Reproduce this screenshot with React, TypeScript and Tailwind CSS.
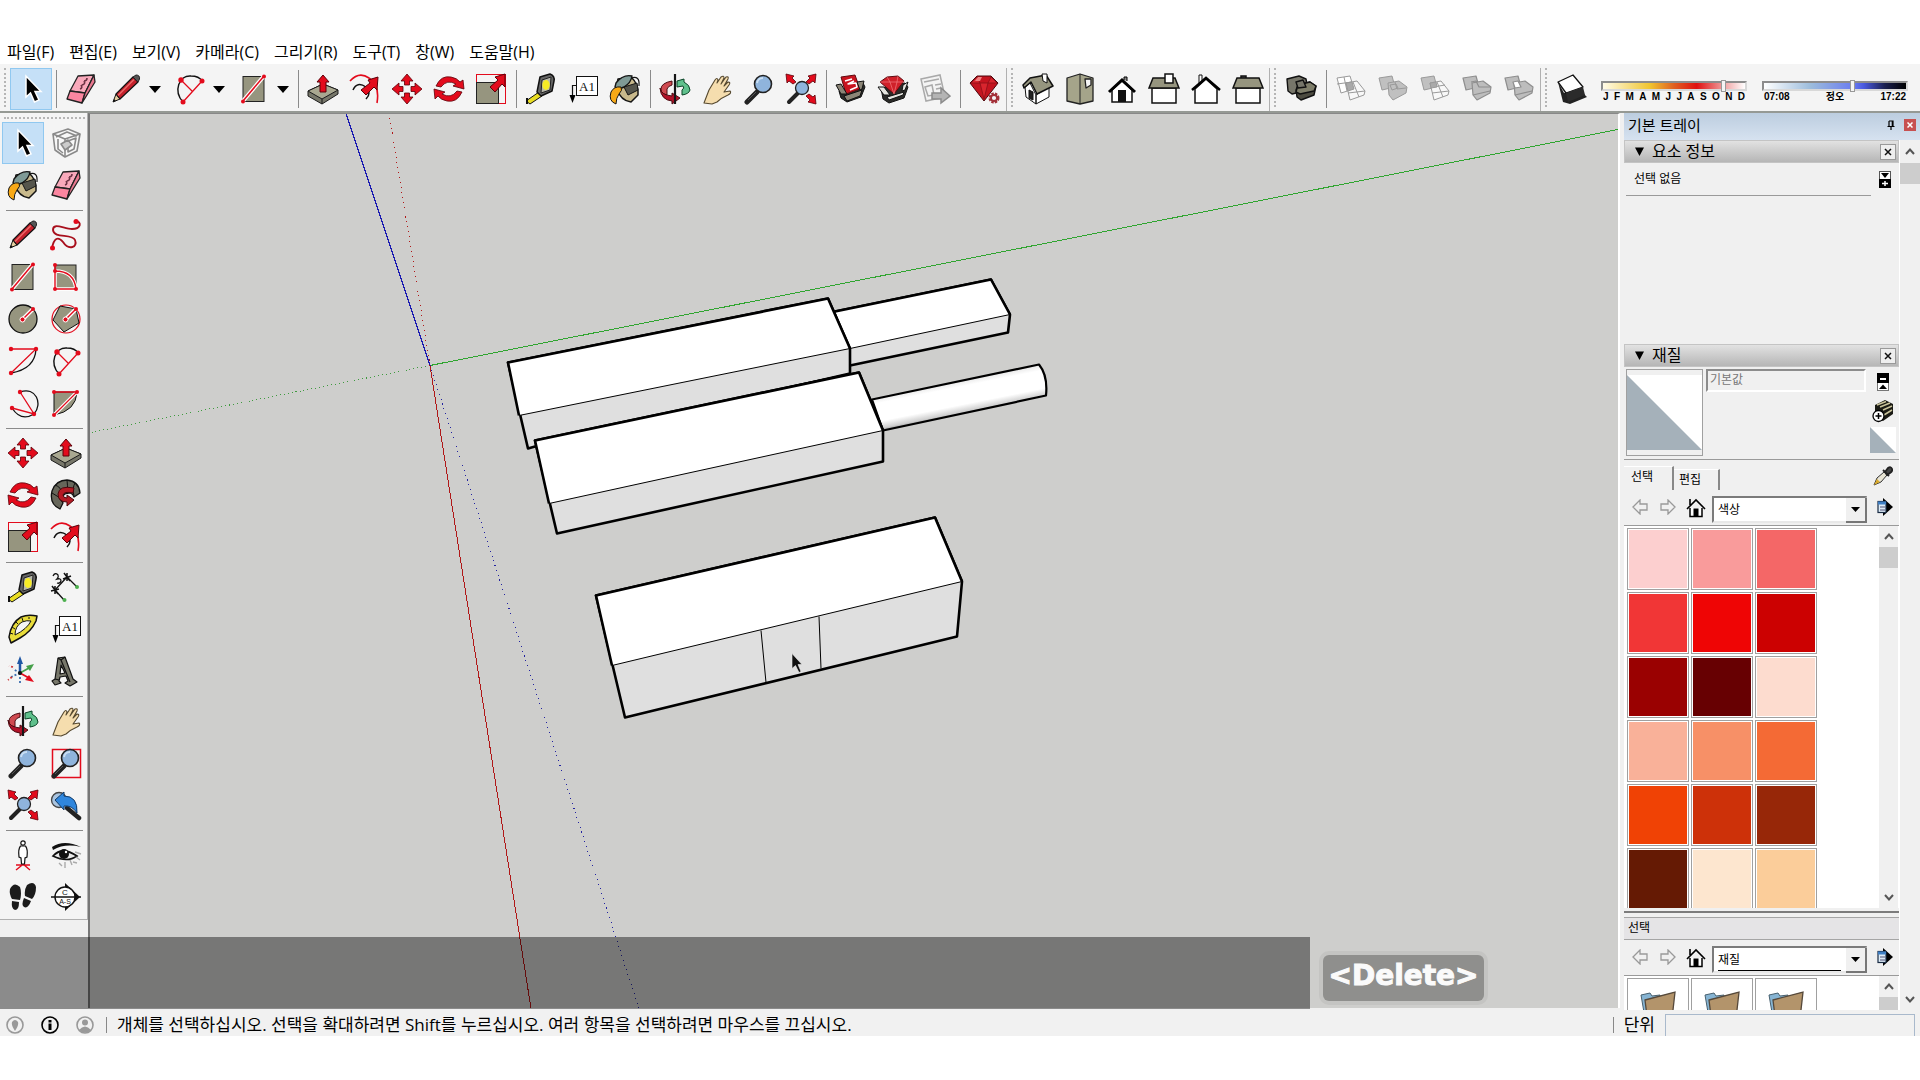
import React from 'react';

const RED = '#e30b1c';
const DARK_RED = '#a80f1c';
const TAUPE = '#96957f';
const INK = '#111111';

const zoomGlass = (
  <>
    <path d="M14 19 L4 29" stroke="#222" strokeWidth="5" strokeLinecap="round" />
    <path d="M13 19 L5 27" stroke="#555" strokeWidth="1" />
    <circle cx="20" cy="11" r="8.5" fill="#8fb4dc" stroke="#222" strokeWidth="1.6" />
    <path d="M14 10 a6 6 0 0 1 6 -5" stroke="#c9def2" strokeWidth="2" fill="none" />
  </>
);

const scaleArrow = (
  <path d="M28 2 L18 5 L21 8 L13 15 L18 20 L25 12 L28 15 Z" transform="translate(2 -1)" fill={RED} stroke="#5a0008" strokeWidth="1" />
);

const solidBack = 'M2 5 L15 3 L18 14 L5 17 Z';
const solidFront = 'M11 10 L22 8 L30 14 L29 20 L16 27 L12 22 Z';

const ICONS: Record<string, React.ReactNode> = {
  cursor: <path d="M11 3 V24 L15.500 20 L19.500 29 L24 27 L20 18.500 H26 Z" fill="#000" stroke="#fff" strokeWidth="1.500" />,
  eraser: (
    <g stroke="#222" strokeWidth="1.300" strokeLinejoin="round">
      <path d="M13 3 L29 2 L20 20 L5 18 Z" fill="#f9a9bb" />
      <path d="M5 18 L20 20 L17 30 L2 26 Z" fill="#fb86a0" />
      <path d="M20 20 L29 2 L30 9 L17 30 Z" fill="#e8788f" />
      <path d="M15 16 q3 -1 1 -4 M17 12 q4 -1 2 -4 M19 8 q3 0 3 -3" fill="none" stroke="#6c3344" strokeWidth="1.600" />
    </g>
  ),
  pencil: (
    <g strokeLinejoin="round">
      <path d="M3 29 L6 21 L10 26 Z" fill="#e5cfa0" stroke="#111" />
      <path d="M6 21 L23 4 L28 9 L10 26 Z" fill="#c4202b" stroke="#111" strokeWidth="1.200" />
      <path d="M8 22.500 L24 6.500" stroke="#ec6a6a" strokeWidth="1.400" />
      <path d="M23 4 L26 2 Q30 2 29.500 6 L28 9 Z" fill="#555" stroke="#222" />
      <path d="M3 29 L4 26 L6 28 Z" fill="#111" />
    </g>
  ),
  arc2: (
    <g fill="none">
      <path d="M9 29 C-1 18 5 2 17 3 Q25 3 28 8" stroke={INK} strokeWidth="1.400" />
      <path d="M7 7 L18 18 M9 29 L28 8" stroke={RED} strokeWidth="1.300" />
      <g fill={RED}><circle cx="7" cy="7" r="2.700" /><circle cx="28" cy="8" r="2.500" /><circle cx="9" cy="29" r="2.500" /></g>
    </g>
  ),
  rect: (
    <>
      <rect x="5" y="3.500" width="21" height="25" fill={TAUPE} stroke="#222" />
      <path d="M5 28 L26 3" stroke="#fff" strokeWidth="4" />
      <path d="M5 28 L26 3" stroke={RED} strokeWidth="1.500" />
      <circle cx="26" cy="3.500" r="2" fill={RED} /><circle cx="5" cy="28.500" r="2" fill={RED} />
    </>
  ),
  pushpull: (
    <g strokeLinejoin="round" stroke="#1b1b1b">
      <path d="M1 18 L16 11 L31 17 L31 21 L15 31 L1 23 Z" fill="#77776a" />
      <path d="M1 18 L16 11 L31 17 L15 26 Z" fill="#a9a891" />
      <path d="M15 26 V31" />
      <path d="M16 2 L22 9 H19 V19 H13 V9 H10 Z" fill={RED} stroke="#5a0008" />
    </g>
  ),
  offset: (
    <g fill="none">
      <path d="M1 8 Q10 -2 20 5 Q31 12 28 30" stroke={RED} strokeWidth="1.600" />
      <path d="M4 17 Q8 8 17 14 Q23 20 17 26" stroke={INK} strokeWidth="1.500" />
      <path d="M29 4 L19 7 L21 10 L12 17 L17 22 L25 14 L28 17 Z" fill={RED} stroke="#5a0008" />
    </g>
  ),
  move: (
    <g fill={RED} stroke="#5a0008" strokeWidth="0.800">
      <path d="M16 1 L22 8 H18.500 V12 H13.500 V8 H10 Z" />
      <path d="M16 31 L22 24 H18.500 V20 H13.500 V24 H10 Z" />
      <path d="M1 16 L8 10 V13.500 H12 V18.500 H8 V22 Z" />
      <path d="M31 16 L24 10 V13.500 H20 V18.500 H24 V22 Z" />
    </g>
  ),
  rotate: (
    <g fill={RED} stroke="#5a0008" strokeWidth="0.800">
      <path d="M3 13 Q8 2 18 4 Q24 5 27 9 L30 7 L31 16 L20 13 L23 11 Q14 6 8 14 Z" />
      <path d="M29 19 Q24 30 14 28 Q8 27 5 23 L2 26 L1 16 L12 19 L9 21 Q18 26 24 18 Z" />
    </g>
  ),
  scale: (
    <>
      <rect x="1.500" y="1.500" width="29" height="29" fill="none" stroke={RED} />
      <rect x="1.500" y="9.500" width="22" height="21" fill={TAUPE} stroke="#222" />
      {scaleArrow}
    </>
  ),
  tape: (
    <g strokeLinejoin="round">
      <path d="M1 28 L14 19 L17 23 L5 31 Z" fill="#e9dd22" stroke="#111" />
      <path d="M2 25 V31" stroke="#111" strokeWidth="2" />
      <path d="M15 4 L25 1 Q30 3 29 8 L27 18 L16 23 L12 19 Z" fill="#666" stroke="#111" strokeWidth="1.500" />
      <path d="M17 7 L26 4 L25 17 L16 20 Z" fill="#b8b8ac" stroke="#222" />
      <ellipse cx="21" cy="12" rx="3.700" ry="5" fill="#f7ec26" />
    </g>
  ),
  text: (
    <>
      <rect x="9.500" y="3.500" width="21" height="19" fill="#fff" stroke="#111" />
      <text x="20" y="17.500" textAnchor="middle" fontSize="13" fontFamily="'Liberation Serif', serif" fill="#111">A1</text>
      <path d="M9 12.500 H5.500 V23" fill="none" stroke="#111" strokeWidth="1.200" />
      <path d="M2.500 22 H8.500 L5.500 30 Z" fill="#000" />
    </>
  ),
  bucket: (
    <g strokeLinejoin="round" stroke="#151515">
      <path d="M9 6 L22 4 Q30 11 29 22 L22 29 Q12 28 7 15 Z" fill="#c8b98c" strokeWidth="1.500" />
      <path d="M15 14 L28 10 L29 17 L19 22 Z" fill="#55554c" />
      <path d="M7 10 Q14 1 23 3 Q22 10 15 14 Q9 17 6 14 Z" fill="#7f9a96" strokeWidth="1.400" />
      <path d="M22 5 Q31 2 30 13" fill="none" strokeWidth="1.200" />
      <path d="M2 19 Q5 13 12 14 Q14 17 10 21 Q7 25 7 31 Q-1 28 2 19 Z" fill="#f8a916" />
    </g>
  ),
  orbit: (
    <g strokeLinejoin="round">
      <path d="M13 8 Q2 10 2 16 Q2 21 8 22 L8 16 Q9 13 13 12 Z" fill="#cf4a50" stroke="#4a0a10" />
      <path d="M18 8 L25 6 V9 Q31 12 31 17 Q30 21 23 22 V17 Q26 15 24 13 L18 14 Z" fill="#5fc08c" stroke="#0a4426" />
      <path d="M1 15 Q2 22 13 23 V20 L21 25 L13 31 V28 Q2 27 1 15 Z" fill="#b31229" stroke="#4a0a10" />
      <path d="M16 1 V31" stroke="#161616" strokeWidth="2.200" />
    </g>
  ),
  hand: (
    <path d="M3 30 L8 17 L14 7 Q16 4 17 7 L16 10 L20 4 Q23 2 23 5 L20 11 L25 4 Q28 3 27 6 L23 13 L27 9 Q30 9 28 12 L23 19 L29 18 Q31 20 27 22 Q20 25 16 29 L11 31 Z" fill="#f5ddae" stroke="#55482e" strokeWidth="1.100" strokeLinejoin="round" />
  ),
  zoom: zoomGlass,
  zoomext: (
    <>
      <path d="M13 20 L4 29" stroke="#222" strokeWidth="4" strokeLinecap="round" />
      <circle cx="17" cy="15" r="6.500" fill="#8fb4dc" stroke="#222" strokeWidth="1.300" />
      <g fill={RED} stroke="#5a0008" strokeWidth="0.800">
        <path d="M1 1 L9 3 L7 5 L11 9 L8 11 L4 8 L2 10 Z" />
        <path d="M31 1 L23 3 L25 5 L21 9 L24 11 L28 8 L30 10 Z" />
        <path d="M31 31 L23 29 L25 27 L21 23 L24 21 L28 24 L30 22 Z" />
      </g>
    </>
  ),
  zoomwin: (
    <>
      <rect x="2.500" y="2.500" width="28" height="28" fill="none" stroke={RED} strokeWidth="1.500" />
      {zoomGlass}
    </>
  ),
  previous: (
    <>
      <circle cx="9" cy="11" r="7.500" fill="#a9c4e0" stroke="#444" strokeWidth="1.300" />
      <path d="M17 19 L29 29" stroke="#222" strokeWidth="4.500" strokeLinecap="round" />
      <path d="M5 11 L14 3 V7 Q28 7 27 24 Q22 16 14 17 V21 Z" fill="#2f86dd" stroke="#123a66" strokeLinejoin="round" />
    </>
  ),
  warehouse: (
    <g strokeLinejoin="round" stroke="#111">
      <path d="M4 18 L28 10 L30 14 L26 24 L12 29 L6 25 Z" fill="#2b2b29" />
      <path d="M6 4 L20 2 L25 16 L11 21 Z" fill="#c9141f" stroke="#5e0a10" />
      <path d="M10 8 L17 6 M19 8 L13 11 L21 10 L22 14 L15 17" fill="none" stroke="#fff" strokeWidth="1.500" />
      <path d="M1 12 L6 11 L12 21 L6 21 Z M22 9 L29 8 L27 16 L25 17 Z M9 23 L27 17 L25 23 L12 28 Z" fill="#8b8577" />
    </g>
  ),
  extwarehouse: (
    <g strokeLinejoin="round" stroke="#111">
      <path d="M4 15 L28 10 L31 14 L27 25 L12 30 L6 26 Z" fill="#2b2b29" />
      <path d="M3 9 L10 4 L21 3 L27 8 L17 21 Z" fill="#d02029" stroke="#5e0a10" />
      <path d="M3 9 H27 M10 4 L13 9 L17 21 M21 3 L20 9 L17 21" fill="none" stroke="#f27a7e" strokeWidth="0.700" />
      <path d="M1 14 L7 14 L13 22 L7 22 Z M26 12 L31 9 L28 17 L25 18 Z M10 24 L27 19 L26 22 L12 27 Z" fill="#e5e5e0" />
    </g>
  ),
  layout: (
    <g fill="#f3f3f3" stroke="#a9a9a9" strokeWidth="1.500">
      <path d="M2 6 L21 2 L26 24 L7 28 Z" />
      <path d="M5 9 L20 6 M6 14 L13 12 L15 22 L9 23 Z M16 12 L22 11 M17 16 L22 15" />
      <path d="M13 20 H22 V15 L31 23 L22 30 V26 H13 Z" fill="#b4b4b4" stroke="#8b8b8b" />
    </g>
  ),
  gem: (
    <>
      <path d="M1 10 L8 3 H22 L29 10 L15 28 Z" fill="#c4141f" stroke="#4d070d" />
      <path d="M2 10 H28 L22 4 L19 10 L15 26 L11 10 L8 4 Z" fill="#d8252e" stroke="#8c0f18" strokeWidth="0.800" />
      <path d="M6 8 L9 4 L13 4 L11 8 Z" fill="#f28080" />
      <circle cx="25" cy="25" r="4" fill="#f3f3f3" stroke="#a33038" strokeWidth="3" strokeDasharray="2.200 1" />
      <circle cx="25" cy="25" r="3" fill="none" stroke="#a33038" strokeWidth="1.800" />
    </>
  ),
  iso: (
    <g stroke="#111" strokeLinejoin="round">
      <path d="M3 14 L8 10 L14 22 L14 31 L4 24 Z M14 22 L27 14 V24 L14 31 Z" fill="#fff" />
      <path d="M1 12 L8 5 L24 2 L31 13 L15 21 L9 9 L2 15 Z" fill={TAUPE} strokeWidth="1.500" />
      <path d="M20 1 H25 V10 L21 8 Z" fill="#fff" />
      <path d="M7 17 L11 19 V27 L7 25 Z" fill="#222" />
    </g>
  ),
  top: (
    <g stroke="#222" strokeLinejoin="round">
      <path d="M3 5 L16 1 L29 5 V28 L16 31 L3 28 Z" fill="#a5a48a" strokeWidth="1.300" />
      <path d="M16 1 V31" />
      <path d="M21 6 H27 V12 L22 15 Z" fill="#f5f5f5" strokeWidth="1.300" />
    </g>
  ),
  front: (
    <>
      <path d="M6 17 V29 H26 V17 L16 8 Z" fill="#fff" stroke="#111" strokeWidth="1.500" />
      <path d="M3 19 L16 7 L29 19" fill="none" stroke="#000" strokeWidth="3" />
      <path d="M21 8 V4 H18 V7" stroke="#000" fill="#888" />
      <rect x="12" y="17" width="8" height="12" fill="#111" />
    </>
  ),
  right: (
    <g stroke="#111" strokeWidth="1.500">
      <rect x="4" y="15" width="24" height="15" fill="#fff" />
      <path d="M5 5 H27 L31 15 H1 Z" fill={TAUPE} />
      <rect x="17" y="1" width="8" height="9" fill="#fff" />
    </g>
  ),
  back: (
    <>
      <path d="M9 10 V2 H12 V8" fill="#fff" stroke="#111" />
      <path d="M5 16 V30 H27 V16 L16 6 Z" fill="#fff" stroke="#111" strokeWidth="1.500" />
      <path d="M2 17 L16 5 L30 17" fill="none" stroke="#000" strokeWidth="2.500" />
    </>
  ),
  left: (
    <g stroke="#111" strokeWidth="1.500">
      <path d="M9 5 V3 H14 V5" fill="#555" />
      <rect x="4" y="15" width="24" height="15" fill="#fff" />
      <path d="M5 5 H27 L31 15 H1 Z" fill={TAUPE} />
    </g>
  ),
  outer: (
    <g stroke="#111" strokeWidth="1.400" strokeLinejoin="round">
      <path d="M2 6 L14 3 L21 6 L23 17 L7 21 L3 18 Z" fill="#77766a" />
      <path d="M11 17 L13 12 L25 9 L31 13 L29 22 L16 27 L12 24 Z" fill="#4c4b40" />
      <path d="M13 12 L25 9 L31 13 L29 18 L15 21 L11 19 Z" fill="#7f7e6a" />
      <path d="M11 9 L18 7 L21 14 L13 15 Z" fill="#77766a" />
    </g>
  ),
  intersect: (
    <g stroke="#9a9a9a" strokeLinejoin="round">
      <path d="M2 5 L15 3 L19 16 L6 20 Z M2 11 L17 9 M9 4 L12 18" fill="#fff" />
      <path d="M11 10 L22 8 L30 18 L29 22 L15 27 Z M13 20 L30 18 M18 9 L24 24" fill="#f8f8f8" />
      <path d="M11 10 L17 9 L19 16 L13 18 Z" fill="#aaa" />
    </g>
  ),
  union: (
    <g stroke="#9a9a9a" strokeLinejoin="round" fill="#c0c0c0">
      <path d={solidBack} /><path d={solidFront} />
      <path d="M13 12 L19 11 L21 15 L15 17 Z" /><path d="M18 9 L20 16 L29 15" fill="none" />
    </g>
  ),
  subtract: (
    <g stroke="#9a9a9a" strokeLinejoin="round">
      <path d={solidBack} fill="#c0c0c0" />
      <path d="M11 10 L22 8 L30 18 L29 22 L15 27 Z M13 20 L30 18 M18 9 L24 24 M14 14 L26 12" fill="#f8f8f8" />
      <path d="M11 10 L17 9 L18 14 L12 15 Z" fill="#aaa" />
    </g>
  ),
  trim: (
    <g stroke="#8e8e8e" strokeWidth="1.200" strokeLinejoin="round" fill="#bdbdbd">
      <path d={solidBack} /><path d={solidFront} />
      <path d="M10 9 L15 8 L18 14 L30 14 M12 22 L29 18" fill="none" />
    </g>
  ),
  split: (
    <g stroke="#8e8e8e" strokeWidth="1.200" strokeLinejoin="round" fill="#bdbdbd">
      <path d={solidBack} /><path d={solidFront} />
      <path d="M10 9 L15 8 L18 14 L12 15 Z" fill="#fff" /><path d="M12 22 L29 18" fill="none" />
    </g>
  ),
  shadow: (
    <g strokeLinejoin="round">
      <path d="M2 9 L8 20 L24 17 L31 24 L14 31 L7 29 Z" fill="#222" />
      <path d="M2 9 L17 2 L27 14 L10 20 Z" fill="#fff" stroke="#111" strokeWidth="1.300" />
      <path d="M10 20 L27 14 L29 22 L12 29 Z" fill="#2b2b2b" />
    </g>
  ),
  component: (
    <g fill="none" stroke="#8a8a8a" strokeWidth="1.600" strokeLinejoin="round">
      <path d="M3 7 L18 2 L30 7 L27 24 L15 30 L5 23 Z" fill="#f8f8f8" />
      <path d="M3 7 L15 12 L30 7 M15 12 V30 M6 10 L17 5 L27 9 M8 12 V22 L13 26 M18 14 L26 11 L24 22 L18 25 Z" />
      <path d="M11 17 L18 13 L22 18 L15 23 Z" fill="#ccc" />
    </g>
  ),
  freehand: (
    <>
      <path d="M2 29 C4 19 8 17 13 23 C19 32 28 28 25 21 C22 14 4 20 3 11 C3 3 14 10 22 10 C31 10 32 3 26 2" fill="none" stroke={DARK_RED} strokeWidth="1.900" />
      <circle cx="2.500" cy="29" r="2.500" fill={RED} /><circle cx="26" cy="2.500" r="2.500" fill={RED} />
    </>
  ),
  rotrect: (
    <>
      <rect x="5" y="4" width="21" height="24" fill={TAUPE} stroke="#222" />
      <path d="M5 28 V10 Q24 10 26 28 Z" fill={TAUPE} stroke="#fff" strokeWidth="3.500" />
      <path d="M5 4 V28 H26 Q24 10 5 10" fill="none" stroke={RED} strokeWidth="1.400" />
      <g fill={RED}><circle cx="5" cy="4" r="2" /><circle cx="5" cy="10" r="2" /><circle cx="5" cy="28" r="2" /><circle cx="26" cy="28" r="2" /></g>
    </>
  ),
  circle: (
    <>
      <circle cx="16" cy="16" r="14" fill={TAUPE} stroke="#111" strokeWidth="1.300" />
      <path d="M15 17 L26 6" stroke="#fff" strokeWidth="4" /><path d="M15 17 L26 6" stroke={RED} strokeWidth="1.500" />
      <circle cx="15.500" cy="16.500" r="2.500" fill={RED} stroke="#fff" /><circle cx="26" cy="6" r="2" fill={RED} />
    </>
  ),
  polygon: (
    <>
      <circle cx="16" cy="16" r="14" fill="none" stroke={RED} strokeWidth="1.200" />
      <path d="M10 3 L26 6 L29 20 L14 29 L3 17 Z" fill={TAUPE} stroke="#111" />
      <path d="M15 17 L26 6" stroke="#fff" strokeWidth="4" /><path d="M15 17 L26 6" stroke={RED} strokeWidth="1.500" />
      <circle cx="15.500" cy="16.500" r="2.500" fill={RED} stroke="#fff" /><circle cx="26" cy="6" r="2" fill={RED} />
    </>
  ),
  arc: (
    <g fill="none">
      <path d="M29 4 Q28 24 4 28" stroke={INK} strokeWidth="1.300" />
      <path d="M4 4 H29 L4 28" stroke={RED} strokeWidth="1.300" />
      <g fill={RED}><circle cx="4" cy="4" r="2.200" /><circle cx="29" cy="4" r="2.200" /><circle cx="4" cy="28" r="2.200" /></g>
    </g>
  ),
  arc3: (
    <g fill="none">
      <path d="M13 5 C29 -1 36 17 27 27 Q14 35 5 21" stroke={INK} strokeWidth="1.300" />
      <path d="M13 5 L27 27 L5 21" stroke={RED} strokeWidth="1.300" />
      <g fill={RED}><circle cx="13" cy="5" r="2.200" /><circle cx="27" cy="27" r="2.200" /><circle cx="5" cy="21" r="2.200" /></g>
    </g>
  ),
  pie: (
    <>
      <path d="M4 5 H27 Q26 24 4 28 Z" fill={TAUPE} stroke="#111" />
      <path d="M27 5 L4 28" stroke="#fff" strokeWidth="3.500" />
      <path d="M4 5 H27 L4 28" fill="none" stroke={RED} strokeWidth="1.300" />
      <g fill={RED}><circle cx="4" cy="5" r="2" /><circle cx="27" cy="5" r="2" /><circle cx="4" cy="28" r="2" /></g>
    </>
  ),
  followme: (
    <g stroke="#111" strokeLinejoin="round">
      <path d="M2 12 Q6 1 17 1 Q29 2 30 14 L24 18 Q22 12 15 15 Q10 18 13 24 L10 30 Q-1 25 2 12 Z" fill="#66665a" strokeWidth="1.300" />
      <path d="M2 14 Q8 16 13 24 M5 6 Q11 8 13 15 M17 1 Q18 6 17 14 M25 4 Q22 9 24 17" fill="none" />
      <path d="M24 9 Q9 6 8 15 Q8 23 17 23 V27 L24 21 L17 16 V19 Q13 19 13 16 Q14 12 23 14 Z" fill="#b51a24" stroke="#4a070c" />
    </g>
  ),
  dimension: (
    <>
      <path d="M5 19 L17 6 M5 19 L14 29 M17 6 L27 16" stroke="#111" strokeWidth="1.300" />
      <path d="M2 15 L8 23 M1 20 L9 18 M14 2 L20 10 M13 8 L21 5 M5 15 V23 M17 2 V10" stroke="#111" strokeWidth="1.500" />
      <circle cx="14.500" cy="29" r="2" fill="#4db04f" /><circle cx="27" cy="16" r="2" fill="#4db04f" />
      <path d="M3 5 Q5 1 8 4 Q9 6 7 8 Q11 7 11 10 Q10 13 7 12" fill="none" stroke="#111" strokeWidth="1.300" />
    </>
  ),
  protractor: (
    <g strokeLinejoin="round" stroke="#111">
      <path d="M4 30 L2 24 Q4 10 14 4 Q21 1 30 3 L29 8 Q24 19 13 25 Z" fill="#e8dc3a" strokeWidth="1.500" />
      <path d="M8 22 Q8 13 15 9 Q20 7 24 8 Q20 16 8 22 Z" fill="#f5f5f5" />
      <path d="M3 20 L6 21 M5 14 L8 16 M9 9 L11 11 M15 5 L16 8 M22 4 L22 6" />
    </g>
  ),
  axes: (
    <g strokeWidth="1.800">
      <path d="M13 18 V30 M13 18 L6 14 M13 18 L4 22" stroke="#3c6fb0" strokeDasharray="2 2" />
      <path d="M13 18 V8" stroke="#1f57a5" strokeWidth="2.500" /><path d="M13 18 L22 13" stroke="#45a04a" /><path d="M13 18 L22 23" stroke={RED} />
      <path d="M13 1 L16 9 H10 Z" fill="#1f57a5" /><path d="M27 9 L23 16 L19 11 Z" fill="#45a04a" /><path d="M27 27 L18 25 L22 20 Z" fill={RED} />
      <path d="M6 12 L2 11 M5 22 L1 25" stroke="#c33" strokeDasharray="2 2" />
      <circle cx="13" cy="18" r="2" fill="#111" />
    </g>
  ),
  text3d: (
    <g stroke="#111" strokeWidth="1.200" strokeLinejoin="round" fill="#77776a">
      <path d="M8 3 L15 2 L23 24 L27 27 L20 31 L15 28 L18 26 L16 21 L10 22 L9 26 L11 28 L5 30 L2 26 L5 24 Z" />
      <path d="M11 10 L15 18 L10 19 Z" fill="#f3f3f3" />
      <path d="M8 3 L11 5 L20 27 M11 5 L15 2 M5 24 L9 25" fill="none" />
    </g>
  ),
  position: (
    <g fill="none" stroke="#111" strokeWidth="1.200">
      <path d="M9 31 L14 27 L16 25 L23 31 M9 26 L23 26" stroke={RED} strokeWidth="1.400" />
      <circle cx="16" cy="4" r="2.200" fill="#fff" />
      <path d="M13.500 7 Q11 10 12 18 L14 19 L14.500 25 H17.500 L18 19 L20 18 Q21 10 18.500 7 Z" fill="#fff" />
    </g>
  ),
  eye: (
    <>
      <path d="M2 8 Q14 0 31 8 Q15 4 3 11 Z" fill="#111" />
      <path d="M3 17 Q12 7 27 17 Q17 24 3 17 Z" fill="#e9e9e9" stroke="#111" strokeWidth="1.700" />
      <circle cx="14" cy="15" r="5" fill="#111" /><circle cx="16" cy="13" r="1.200" fill="#fff" />
      <path d="M9 24 L12 27 M15 23 L15 29 M20 21 L22 26 M26 18 L30 21 M25 13 L31 15 M23 23 L27 24" stroke="#aaa" strokeWidth="1.400" />
    </>
  ),
  walk: (
    <g fill="#1b1b1b">
      <path d="M3 8 Q7 0 13 6 Q15 12 13 19 L5 18 Q2 13 3 8 Z" /><path d="M5 20 L12 21 Q12 29 8 29 Q4 28 5 20 Z" />
      <path d="M20 4 Q27 -1 29 6 Q29 14 25 18 L18 15 Q17 9 20 4 Z" /><path d="M17 17 L24 20 Q21 28 17 26 Q14 24 17 17 Z" />
    </g>
  ),
  section: (
    <>
      <path d="M15 2 L30 16 L15 30 Z" fill="#111" />
      <circle cx="15" cy="16" r="10" fill="#fff" stroke="#111" strokeWidth="1.400" />
      <path d="M1 16 H31" stroke="#111" strokeWidth="1.500" />
      <text x="15" y="14" textAnchor="middle" fontSize="8" fontFamily="'Liberation Sans', sans-serif" fill="#111">C</text>
      <text x="15" y="23" textAnchor="middle" fontSize="7" fontFamily="'Liberation Sans', sans-serif" fill="#111">A-S</text>
    </>
  ),
};

function Icon({ name }: { name: string }) {
  return <svg viewBox="0 0 32 32" className="size-8 shrink-0" aria-hidden="true" fill="none">{ICONS[name]}</svg>;
}

function Tool({ name, label, active }: { name: string; label: string; active?: boolean }) {
  return (
    <button aria-label={label} className={`flex size-[42px] shrink-0 items-center justify-center ${active ? 'border border-[#90c8f0] bg-[#c5e0f7]' : ''}`}>
      <Icon name={name} />
    </button>
  );
}

function SplitTool({ name, label }: { name: string; label: string }) {
  return (
    <div className="flex h-[42px] shrink-0 items-center">
      <button aria-label={label} className="flex w-[47px] justify-center"><Icon name={name} /></button>
      <button aria-label={`${label} 메뉴`} className="flex w-[17px] items-center">
        <svg viewBox="0 0 12 7" className="h-[7px] w-3" aria-hidden="true"><path d="M0 0 H12 L6 7 Z" fill="#000" /></svg>
      </button>
    </div>
  );
}

const VSep = () => <div className="flex h-[42px] w-2 shrink-0 justify-center"><div className="h-[38px] w-px self-center bg-[#8a8a8a]" /></div>;
const HSep = () => <div className="flex h-2 items-center px-1"><div className="h-px flex-1 bg-[#8a8a8a]" /></div>;
const Grip = () => (
  <div className="flex w-2.5 shrink-0 justify-center self-stretch pb-1"><div className="border-l-2 border-dotted border-[#b5b5b5]" /></div>
);

const MENUS = ['파일(F)', '편집(E)', '보기(V)', '카메라(C)', '그리기(R)', '도구(T)', '창(W)', '도움말(H)'];

const SIDE: string[][] = [
  ['cursor', 'component', 'bucket', 'eraser'],
  ['pencil', 'freehand', 'rect', 'rotrect', 'circle', 'polygon', 'arc', 'arc2', 'arc3', 'pie'],
  ['move', 'pushpull', 'rotate', 'followme', 'scale', 'offset'],
  ['tape', 'dimension', 'protractor', 'text', 'axes', 'text3d'],
  ['orbit', 'hand', 'zoom', 'zoomwin', 'zoomext', 'previous'],
  ['position', 'eye', 'walk', 'section'],
];

const SWATCHES = [
  '#fccfcf', '#f99b9b', '#f46767', '#f13636', '#ef0505', '#cc0101', '#9a0101', '#670002', '#fddccf',
  '#f9b199', '#f79067', '#f46a35', '#f04205', '#cd3109', '#972708', '#651a04', '#fde6cf', '#fbcd9a',
];

function Toolbar() {
  return (
    <div className="flex h-[49px] shrink-0 border-b-2 border-[#959994] bg-[#f4f4f4] pt-1">
      <div className="flex border-r border-[#b0b0b0]">
        <Grip />
        <Tool name="cursor" label="선택" active />
        <VSep />
        <Tool name="eraser" label="지우개" />
        <SplitTool name="pencil" label="선" />
        <SplitTool name="arc2" label="호" />
        <SplitTool name="rect" label="직사각형" />
        <VSep />
        {['pushpull', 'offset', 'move', 'rotate', 'scale'].map((n) => <Tool key={n} name={n} label={n} />)}
        <VSep />
        {['tape', 'text', 'bucket'].map((n) => <Tool key={n} name={n} label={n} />)}
        <VSep />
        {['orbit', 'hand', 'zoom', 'zoomext'].map((n) => <Tool key={n} name={n} label={n} />)}
        <VSep />
        {['warehouse', 'extwarehouse', 'layout'].map((n) => <Tool key={n} name={n} label={n} />)}
        <VSep />
        <Tool name="gem" label="확장" />
      </div>
      <div className="flex border-r border-[#b0b0b0]">
        <Grip />
        {['iso', 'top', 'front', 'right', 'back', 'left'].map((n) => <Tool key={n} name={n} label={n} />)}
      </div>
      <div className="flex border-r border-[#b0b0b0]">
        <Grip />
        <Tool name="outer" label="외부 쉘" />
        <VSep />
        {['intersect', 'union', 'subtract', 'trim', 'split'].map((n) => <Tool key={n} name={n} label={n} />)}
      </div>
      <div className="flex flex-1">
        <Grip />
        <Tool name="shadow" label="그림자" />
        <div className="flex gap-[15px] pt-[13px] pl-2">
          <ShadowSlider label="날짜" value={86} track="bg-[linear-gradient(90deg,#fffbe8,#f0c530_33%,#e06020_50%,#e01010_66%,#f0a0a0_85%,#fff)]">
            {'JFMAMJJASOND'.split('').map((m, i) => <span key={i}>{m}</span>)}
          </ShadowSlider>
          <ShadowSlider label="시간" value={63} track="bg-[linear-gradient(90deg,#fff,#9cbcdc_33%,#6a7cf0_63%,#4a5ae0_70%,#1b2050_85%,#000)]">
            <span>07:08</span><span>정오</span><span>17:22</span>
          </ShadowSlider>
        </div>
      </div>
    </div>
  );
}

function ShadowSlider({ label, value, track, children }: { label: string; value: number; track: string; children: React.ReactNode }) {
  return (
    <div className="w-[146px]">
      <input
        type="range"
        aria-label={label}
        defaultValue={value}
        className={`block h-2.5 w-full appearance-none border-2 border-[#8c8c8c] border-r-[#d8d8d8] border-b-[#d8d8d8] ${track} [&::-webkit-slider-thumb]:h-3 [&::-webkit-slider-thumb]:w-[5px] [&::-webkit-slider-thumb]:appearance-none [&::-webkit-slider-thumb]:border [&::-webkit-slider-thumb]:border-[#999] [&::-webkit-slider-thumb]:bg-[#f4f4f4]`}
      />
      <div className="flex justify-between px-0.5 font-['Liberation_Sans','Noto_Sans_CJK_KR',sans-serif] text-[10px] leading-3 font-bold">{children}</div>
    </div>
  );
}

function Scene() {
  return (
    <svg viewBox="90 113 1528 895" preserveAspectRatio="xMidYMid slice" className="absolute inset-0 size-full" role="img" aria-label="모델 뷰">
      <defs>
        <linearGradient id="cyl" gradientUnits="userSpaceOnUse" x1="950" y1="381" x2="957" y2="416">
          <stop offset="0" stopColor="#e4e4e4" /><stop offset="0.200" stopColor="#fff" /><stop offset="0.700" stopColor="#fff" /><stop offset="0.900" stopColor="#cfcfcf" /><stop offset="1" stopColor="#8a8a8a" />
        </linearGradient>
      </defs>
      <g fill="none" strokeWidth="1" shapeRendering="crispEdges">
        <path d="M430 365 L1618 129" stroke="#2fa52f" />
        <path d="M430 365 L90 432" stroke="#3f9a3f" strokeDasharray="1 3" />
        <path d="M430 365 L346 113" stroke="#1a1ab0" />
        <path d="M430 365 L639 1008" stroke="#2222a0" strokeDasharray="1 4" />
        <path d="M430 365 L531 1008" stroke="#b01818" />
        <path d="M430 365 L389 113" stroke="#b01818" strokeDasharray="1 4" />
      </g>
      <g strokeLinejoin="round" stroke="#000" strokeWidth="2.600">
        <path d="M835 311 L991 279 L1010 314 L1008 332 L850 365 Z" fill="#dfdfdf" />
        <path d="M835 311 L991 279 L1010 314 L850 348 Z" fill="#fff" stroke="none" />
        <path d="M835 311 L991 279 L1010 314" fill="none" />
        <path d="M850 348 L1010 314" strokeWidth="1" />
        <path d="M508 362 L828 298 L850 348 V373 L535 446 L528 448 Z" fill="#dfdfdf" />
        <path d="M508 362 L828 298 L850 348 L519 415 Z" fill="#fff" stroke="none" />
        <path d="M519 415 L508 362 L828 298 L850 348" fill="none" />
        <path d="M519 415 L850 348" strokeWidth="1" />
        <path d="M872 399 L1039 364 Q1048 375 1046 395 L883 430 Z" fill="url(#cyl)" strokeWidth="2.200" />
        <path d="M535 440 L859 372 L883 430 V461 L557 533 Z" fill="#dfdfdf" />
        <path d="M535 440 L859 372 L883 430 L549 503 Z" fill="#fff" stroke="none" />
        <path d="M549 503 L535 440 L859 372 L883 430" fill="none" />
        <path d="M549 503 L883 430" strokeWidth="1" />
        <path d="M596 595 L935 517 L962 581 L957 636 L625 717 Z" fill="#dfdfdf" />
        <path d="M596 595 L935 517 L962 581 L612 665 Z" fill="#fff" stroke="none" />
        <path d="M612 665 L596 595 L935 517 L962 581" fill="none" />
        <path d="M612 665 L962 581 M761 630 L766 682 M819 616 L821 668" strokeWidth="1" fill="none" />
      </g>
      <path d="M792 653 V668 L795.500 665 L799 672 L801 671 L798 664 H802 Z" fill="#111" stroke="#eee" strokeWidth="0.600" />
    </svg>
  );
}

function PanelHeader({ title }: { title: string }) {
  return (
    <div className="flex h-[23px] shrink-0 items-center border border-[#c4c4c4] bg-linear-to-b from-[#e2e2e2] to-[#b6b6b6] pr-0.5 pl-2.5">
      <svg viewBox="0 0 9 9" className="size-[9px]" aria-hidden="true"><path d="M0 0.500 H9 L4.500 9 Z" fill="#000" /></svg>
      <h2 className="flex-1 pb-0.5 pl-2 text-base leading-5">{title}</h2>
      <button aria-label={`${title} 닫기`} className="flex size-4 items-center justify-center border border-[#999] bg-[#eee]">
        <svg viewBox="0 0 8 8" className="size-2" aria-hidden="true"><path d="M1 1 L7 7 M7 1 L1 7" stroke="#111" strokeWidth="1.500" /></svg>
      </button>
    </div>
  );
}

function Chevron({ down }: { down?: boolean }) {
  return (
    <svg viewBox="0 0 10 7" className="h-[7px] w-2.5" aria-hidden="true">
      <path d={down ? 'M1 1 L5 5.500 L9 1' : 'M1 6 L5 1.500 L9 6'} fill="none" stroke="#555" strokeWidth="2" />
    </svg>
  );
}

function Nav({ label, underline }: { label: string; underline?: boolean }) {
  return (
    <div className="flex shrink-0 items-center border-b border-[#9a9a9a] pt-1.5 pr-1 pb-0.5 pl-2">
      <button aria-label="뒤로" className="mr-3 mb-1.5">
        <svg viewBox="0 0 16 16" className="block size-4" aria-hidden="true"><path d="M1 8 L8 1 V5 H15 V11 H8 V15 Z" fill="none" stroke="#999" strokeWidth="1.300" /></svg>
      </button>
      <button aria-label="앞으로" className="mr-2.5 mb-1.5">
        <svg viewBox="0 0 16 16" className="block size-4" aria-hidden="true"><path d="M15 8 L8 1 V5 H1 V11 H8 V15 Z" fill="none" stroke="#999" strokeWidth="1.300" /></svg>
      </button>
      <button aria-label="홈" className="mr-1.5 mb-1">
        <svg viewBox="0 0 20 20" className="block size-5" aria-hidden="true">
          <path d="M4 10 V18.500 H16 V10" fill="#fff" stroke="#000" strokeWidth="1.500" />
          <path d="M1 11 L10 2 L19 11 M4 7 V1" fill="none" stroke="#000" strokeWidth="1.600" /><rect x="7.500" y="10.500" width="5" height="8" fill="#000" />
        </svg>
      </button>
      <div className="relative flex-1">
        <select aria-label={label} className="block h-[27px] w-full appearance-none border-2 border-[#7b7b7b] border-r-[#b0b0b0] border-b-[#e8e8e8] bg-white pl-1 text-xs leading-4">
          <option>{label}</option>
        </select>
        {underline && <span className="pointer-events-none absolute right-[26px] bottom-0.5 left-1.5 h-px bg-black" />}
        <span className="pointer-events-none absolute top-0.5 right-0 bottom-0 flex w-[21px] items-center justify-center border-r-2 border-b-2 border-[#777] bg-[#f0f0f0]">
          <svg viewBox="0 0 9 5" className="h-[5px] w-[9px]" aria-hidden="true"><path d="M0 0 H9 L4.500 5 Z" fill="#000" /></svg>
        </span>
      </div>
      <button aria-label="세부 정보" className="mb-1.5 ml-2">
        <svg viewBox="0 0 20 20" className="block size-5" aria-hidden="true">
          <path d="M8 1 L18 10 L8 19 Z" fill="#000" /><rect x="3" y="4.500" width="8" height="11" fill="#dcebf8" stroke="#1a2c44" strokeWidth="1.200" />
          <path d="M3 6 H11" stroke="#3f7fc4" strokeWidth="3" /><path d="M5 10 H10 M5 13 H10" stroke="#557" />
        </svg>
      </button>
    </div>
  );
}

function ListScroll({ both }: { both?: boolean }) {
  return (
    <div className="mr-px flex w-[19px] shrink-0 flex-col items-center bg-[#f0f0f0]">
      <div className="flex h-[21px] shrink-0 items-center"><Chevron /></div>
      <div className="h-[21px] w-full shrink bg-[#cdcdcd]" />
      {both && <div className="mt-auto flex h-[21px] items-center"><Chevron down /></div>}
    </div>
  );
}

function Tray() {
  return (
    <aside className="flex w-[296px] shrink-0 flex-col bg-[#f0f0f0]">
      <div className="flex h-[27px] shrink-0 items-center bg-linear-to-b from-[#bccddf] to-[#d6e2f0] pr-1 pb-1 pl-1">
        <h1 className="flex-1 text-[15px] leading-5">기본 트레이</h1>
        <button aria-label="고정" className="mr-[9px]">
          <svg viewBox="0 0 8 10" className="block h-2.5 w-2" aria-hidden="true"><path d="M2 1 H6 V6 M2 1 V6 M0.500 6.500 H7.500 M4 7 V10 M5.300 1 V6" stroke="#000" strokeWidth="1.200" fill="none" /></svg>
        </button>
        <button aria-label="트레이 닫기" className="flex size-3 items-center justify-center bg-[#c75050]">
          <svg viewBox="0 0 6 6" className="size-1.5" aria-hidden="true"><path d="M0.500 0.500 L5.500 5.500 M5.500 0.500 L0.500 5.500" stroke="#fff" strokeWidth="1.500" /></svg>
        </button>
      </div>
      <div className="flex min-h-0 flex-1">
        <div className="flex min-w-0 flex-1 flex-col">
          <PanelHeader title="요소 정보" />
          <section className="h-[181px] shrink-0 pr-2 pl-0.5">
            <div className="mr-5 flex h-[33px] items-center border-b border-[#9a9a9a] pl-2">
              <p className="flex-1 text-xs">선택 없음</p>
              <button aria-label="세부 정보 표시" className="-mr-5">
                <svg viewBox="0 0 12 17" className="h-[17px] w-3" aria-hidden="true">
                  <rect x="0.500" y="0.500" width="11" height="16" fill="#fff" stroke="#555" /><path d="M2 2 H10 L6 7 Z" /><rect y="8" width="12" height="9" /><path d="M3 12.500 H9 M6 10 V15" stroke="#fff" strokeWidth="1.500" />
                </svg>
              </button>
            </div>
          </section>
          <PanelHeader title="재질" />
          <section className="flex h-[93px] shrink-0 gap-[3px] border-b border-[#9a9a9a] pt-0.5 pr-0.5 pl-0.5">
            <div className="flex h-[87px] w-[77px] shrink-0 items-center border border-[#a0a0a0]">
              <svg viewBox="0 0 75 75" className="w-full" aria-hidden="true"><rect width="75" height="75" fill="#fff" /><path d="M0 0 L75 75 H0 Z" fill="#a5b1ba" /></svg>
            </div>
            <input aria-label="재질 이름" placeholder="기본값" disabled className="h-[23px] min-w-0 flex-1 border-2 border-[#8c8c8c] border-r-white border-b-white bg-[#f0f0f0] pb-0.5 pl-0.5 text-xs placeholder:text-[#777]" />
            <div className="flex w-[28px] flex-col items-center gap-2 pt-1">
              <button aria-label="보조 창">
                <svg viewBox="0 0 12 18" className="block h-[18px] w-3" aria-hidden="true">
                  <rect x="0.500" y="0.500" width="11" height="17" fill="#fff" stroke="#777" /><rect width="12" height="10" /><rect x="3" y="5" width="6" height="2" fill="#fff" /><path d="M2 16 H10 L6 11.500 Z" />
                </svg>
              </button>
              <button aria-label="재질 만들기">
                <svg viewBox="0 0 22 24" className="block h-6 w-[22px]" aria-hidden="true">
                  <path d="M3 6 L13 1 L21 5 V15 L11 22 L3 18 Z" fill="#1a1a14" /><path d="M5 6 L14 2.500 M8 8 L18 4 M11 11 L20 7 M12 16 L20 11" stroke="#c9c39b" strokeWidth="1.500" />
                  <circle cx="6.500" cy="17" r="5.500" fill="#fff" stroke="#000" strokeWidth="1.300" /><path d="M3.500 17 H9.500 M6.500 14 V20" stroke="#000" strokeWidth="1.500" />
                </svg>
              </button>
              <svg viewBox="0 0 26 26" className="-mt-1 size-[26px] shrink-0" aria-hidden="true"><rect width="26" height="26" fill="#fff" /><path d="M0 0 L26 26 H0 Z" fill="#a5b1ba" /></svg>
            </div>
          </section>
          <div className="flex h-[30px] shrink-0 items-end pr-1.5" role="tablist">
            <button role="tab" aria-selected="true" className="h-6 w-[50px] border-t border-r-2 border-t-white border-r-[#888] pr-3 pb-1 text-xs leading-4">선택</button>
            <button role="tab" aria-selected="false" className="h-[21px] w-[46px] border-t border-r-2 border-t-white border-r-[#888] pr-3 text-xs leading-4">편집</button>
            <button aria-label="스포이드" className="mb-1 ml-auto">
              <svg viewBox="0 0 20 20" className="block size-5" aria-hidden="true">
                <path d="M1 19 L4 12 L11 6 L14 9 L8 16 Z" fill="#e8e4d4" stroke="#333" /><path d="M1 19 L4 13 L7 16 Z" fill="#d9a92b" />
                <path d="M10 4 L16 10 M12 6 L15 2 Q18 0 19 3 Q20 5 17 7 L14 9 Z" fill="#444" stroke="#222" strokeWidth="1.800" />
              </svg>
            </button>
          </div>
          <Nav label="색상" />
          <div className="flex min-h-0 flex-1 overflow-hidden bg-white">
            <div className="grid flex-1 auto-rows-[62px] grid-cols-[repeat(3,62px)] gap-0.5 overflow-hidden pt-0.5 pl-[3px]">
              {SWATCHES.map((c) => (
                <button key={c} aria-label={c} className="border border-[#a0a0a0] p-px">
                  <span className="block size-full" style={{ backgroundColor: c }} />
                </button>
              ))}
            </div>
            <ListScroll both />
          </div>
          <div className="mt-[3px] h-[2px] shrink-0 bg-[#7c7c7c]" />
          <h3 className="mt-1 flex h-[23px] shrink-0 items-center border-y border-[#a5a5a5] bg-[#e5e4e6] pb-0.5 pl-1 text-xs">선택</h3>
          <Nav label="재질" underline />
          <div className="flex h-[34px] shrink-0 overflow-hidden bg-white">
            <div className="flex flex-1 gap-0.5 pt-0.5 pl-[3px]">
              {['a', 'b', 'c'].map((k) => (
                <button key={k} aria-label={`재질 폴더 ${k}`} className="flex h-[62px] w-[62px] justify-center border border-[#a0a0a0] pt-3">
                  <svg viewBox="0 0 36 34" className="h-[34px] w-9" aria-hidden="true">
                    <path d="M1 4 L10 2 L12 5 L20 4 V32 L6 33 Z" fill="#86b4d3" stroke="#47606f" /><path d="M5 9 L35 1 L32 28 L8 33 Z" fill="#b3946b" stroke="#55483a" strokeWidth="1.300" />
                  </svg>
                </button>
              ))}
            </div>
            <ListScroll />
          </div>
        </div>
        <div className="flex w-[21px] shrink-0 flex-col items-center border-l border-white">
          <div className="flex h-[23px] items-center"><Chevron /></div>
          <div className="h-[21px] w-full bg-[#cdcdcd]" />
          <div className="mt-auto flex h-[21px] items-center"><Chevron down /></div>
        </div>
      </div>
    </aside>
  );
}

export default function App() {
  return (
    <div className="relative flex h-screen flex-col overflow-hidden bg-white pt-10 pb-11 font-['Open_Sans','Noto_Sans_CJK_KR',sans-serif] text-black">
      <nav className="flex h-6 shrink-0 items-center gap-[15px] pl-[7px]">
        {MENUS.map((m) => <button key={m} className="text-base leading-5">{m}</button>)}
      </nav>
      <Toolbar />
      <main className="flex min-h-0 flex-1 bg-[#f0f0f0]">
        <div className="w-[88px] shrink-0">
          <div className="border-r border-b border-[#b0b0b0] bg-[#f4f4f4] pb-px pl-0.5">
            <div className="flex h-[9px] items-center px-0.5"><div className="flex-1 border-t-2 border-dotted border-[#b5b5b5]" /></div>
            {SIDE.map((group, i) => (
              <div key={i}>
                {i > 0 && <HSep />}
                <div className="grid grid-cols-2">
                  {group.map((n) => <Tool key={n} name={n} label={n} active={n === 'cursor'} />)}
                </div>
              </div>
            ))}
          </div>
        </div>
        <div className="relative mr-1 mb-0.5 min-w-0 flex-1 border-t border-r-2 border-l-2 border-t-[#888] border-r-white border-l-[#777] bg-[#cececc]">
          <Scene />
          <div className="absolute right-[134px] bottom-[7px] flex h-[46px] w-[161px] items-center justify-center rounded-md bg-[#8f8f8d] shadow-[0_0_0_4px_#c4c4c2]">
            <kbd className="pb-1 font-['DejaVu_Sans',sans-serif] text-[28px] leading-8 font-bold text-[#fafafa] [-webkit-text-stroke:1px_#fafafa]">&lt;Delete&gt;</kbd>
          </div>
        </div>
        <Tray />
      </main>
      <footer className="flex h-[26px] shrink-0 items-center bg-[#f1f1f1] pt-1 pl-1.5">
        <div className="flex gap-[17px]">
          {['#999', '#000', '#999'].map((c, i) => (
            <button key={i} aria-label={['위치', '제작자', '로그인'][i]}>
              <svg viewBox="0 0 18 18" className="block size-[18px]" aria-hidden="true">
                <circle cx="9" cy="9" r="8" fill="none" stroke={c} strokeWidth="1.600" />
                {i === 0 && <path d="M9 15 Q5 9 6 6 Q9 2 12 6 Q13 9 9 15 Z" fill={c} />}
                {i === 1 && <path d="M7.500 7.500 H10.500 V14 H7.500 Z M7.500 4 H10.500 V6.500 H7.500 Z" fill={c} />}
                {i === 2 && <><circle cx="9" cy="6.500" r="3" fill={c} /><path d="M3 14 Q9 7 15 14 Q9 19 3 14 Z" fill={c} /></>}
              </svg>
            </button>
          ))}
        </div>
        <div className="mr-2.5 ml-3 h-4 w-px bg-[#888]" />
        <p className="flex-1 text-[17px] leading-5">개체를 선택하십시오. 선택을 확대하려면 Shift를 누르십시오. 여러 항목을 선택하려면 마우스를 끄십시오.</p>
        <div className="mr-2.5 h-4 w-px bg-[#888]" />
        <label htmlFor="measure" className="text-[17px] leading-5">단위</label>
        <input id="measure" className="mr-[5px] ml-2.5 h-[22px] w-[250px] border border-b-0 border-[#a9b9cc] bg-[#f1f1f1] px-1" />
      </footer>
      <div className="pointer-events-none absolute bottom-[71px] left-0 h-[72px] w-[1310px] bg-black/42" />
    </div>
  );
}
